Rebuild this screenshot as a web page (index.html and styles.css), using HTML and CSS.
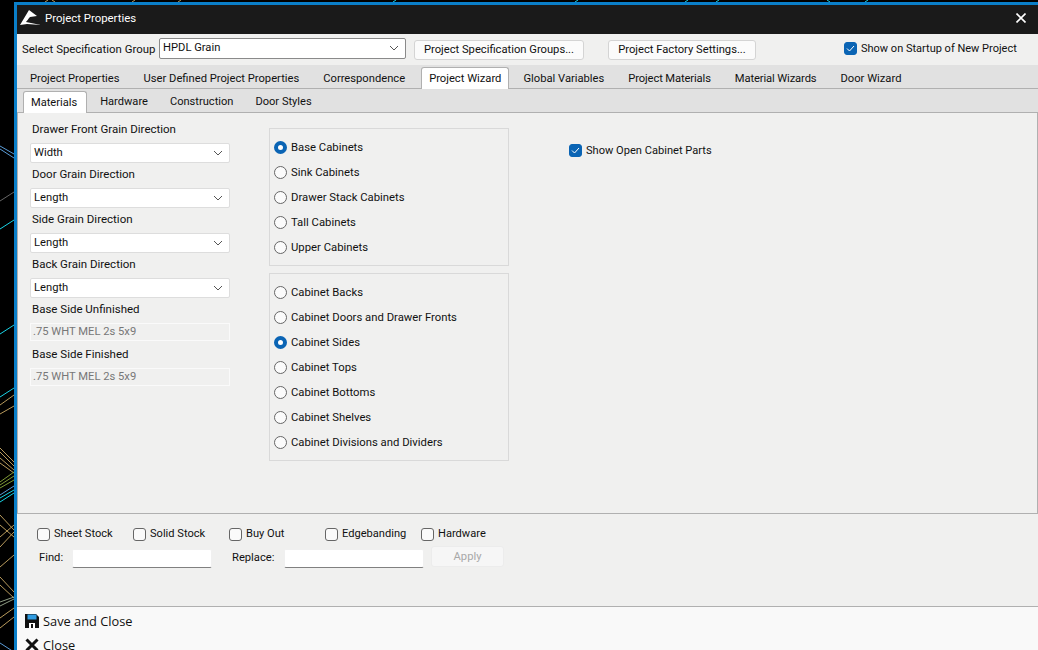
FILE: index.html
```html
<!DOCTYPE html>
<html lang="en">
<head>
<meta charset="utf-8">
<title>Project Properties</title>
<link rel="stylesheet" href="styles.css">
</head>
<body>
<svg class="cad" width="1038" height="650" viewBox="0 0 1038 650" fill="none">
  <g stroke="#19d3e6">
    <path d="M0 229L14 220M0 334L14 325M0 397L14 388M0 498L14 490M0 502L14 493"/>
    <path d="M393 2L396 0M575 2L578 0M685 2L688 0M716 2L719 0M830 2L827 0M865 2L868 0"/>
  </g>
  <g stroke="#5a9bd6"><path d="M0 146L14 154M0 149L14 158M0 495L14 486M0 643L14 652"/></g>
  <path d="M0 201L14 192" stroke="#666"/>
  <g stroke="#b89a5c">
    <path d="M0 405L14 395M0 414L14 406M0 448L14 462M0 452L14 466M0 458L14 470M0 463L14 473M0 515L14 530M0 525L14 537M0 537L14 525M0 547L14 532M0 567L14 555M0 577L14 592M0 585L14 598M0 618L14 608M0 628L14 617"/>
    <path d="M45 2L48 0M52 0L55 2M132 2L135 0M178 2L181 0"/>
  </g>
  <g stroke="#7f9a35"><path d="M0 482L14 472M0 485L14 476M0 488L14 480"/></g>
  <path d="M0 602L14 597M0 606L14 599" stroke="#8f9d85"/>
</svg>
<main class="window">
  <header class="titlebar">
    <svg class="logo" width="21" height="16" viewBox="0 0 21 16"><path d="M0 15L9 0L17 6L10 7C8 9 7 11 6 12L21 15L7 14Z" fill="#fff"/></svg>
    <span class="title">Project Properties</span>
    <svg class="closex" width="10" height="10" viewBox="0 0 10 10"><path d="M0.5 0.5L9.5 9.5M9.5 0.5L0.5 9.5" stroke="#fff" stroke-width="1.6"/></svg>
  </header>

  <section class="specbar">
    <label class="speclabel">Select Specification Group</label>
    <div class="select specselect"><span>HPDL Grain</span><svg class="chev" width="10" height="6" viewBox="0 0 10 6"><path d="M1 1L5 5L9 1" stroke="#555" fill="none"/></svg></div>
    <button class="btn btn-groups">Project Specification Groups...</button>
    <button class="btn btn-factory">Project Factory Settings...</button>
    <label class="check startup"><span class="box on"><svg width="13" height="13" viewBox="0 0 13 13"><path d="M3 6.5L5.5 9L10 4" stroke="#fff" fill="none"/></svg></span>Show on Startup of New Project</label>
  </section>

  <nav class="tabs main-tabs">
    <span class="tab">Project Properties</span>
    <span class="tab">User Defined Project Properties</span>
    <span class="tab">Correspondence</span>
    <span class="tab active">Project Wizard</span>
    <span class="tab">Global Variables</span>
    <span class="tab tight">Project Materials</span>
    <span class="tab tight">Material Wizards</span>
    <span class="tab">Door Wizard</span>
  </nav>
  <nav class="tabs sub-tabs">
    <span class="tab active">Materials</span>
    <span class="tab">Hardware</span>
    <span class="tab">Construction</span>
    <span class="tab">Door Styles</span>
  </nav>

  <section class="panel">
    <div class="fields">
      <label>Drawer Front Grain Direction</label>
      <div class="select"><span>Width</span><svg class="chev" width="10" height="6" viewBox="0 0 10 6"><path d="M1 1L5 5L9 1" stroke="#555" fill="none"/></svg></div>
      <label>Door Grain Direction</label>
      <div class="select"><span>Length</span><svg class="chev" width="10" height="6" viewBox="0 0 10 6"><path d="M1 1L5 5L9 1" stroke="#555" fill="none"/></svg></div>
      <label>Side Grain Direction</label>
      <div class="select"><span>Length</span><svg class="chev" width="10" height="6" viewBox="0 0 10 6"><path d="M1 1L5 5L9 1" stroke="#555" fill="none"/></svg></div>
      <label>Back Grain Direction</label>
      <div class="select"><span>Length</span><svg class="chev" width="10" height="6" viewBox="0 0 10 6"><path d="M1 1L5 5L9 1" stroke="#555" fill="none"/></svg></div>
      <label>Base Side Unfinished</label>
      <div class="readonly">.75 WHT MEL 2s 5x9</div>
      <label>Base Side Finished</label>
      <div class="readonly">.75 WHT MEL 2s 5x9</div>
    </div>
    <div class="groups">
      <div class="group">
        <div class="radio"><span class="dot on"></span>Base Cabinets</div>
        <div class="radio"><span class="dot"></span>Sink Cabinets</div>
        <div class="radio"><span class="dot"></span>Drawer Stack Cabinets</div>
        <div class="radio"><span class="dot"></span>Tall Cabinets</div>
        <div class="radio"><span class="dot"></span>Upper Cabinets</div>
      </div>
      <div class="group">
        <div class="radio"><span class="dot"></span>Cabinet Backs</div>
        <div class="radio"><span class="dot"></span>Cabinet Doors and Drawer Fronts</div>
        <div class="radio"><span class="dot on"></span>Cabinet Sides</div>
        <div class="radio"><span class="dot"></span>Cabinet Tops</div>
        <div class="radio"><span class="dot"></span>Cabinet Bottoms</div>
        <div class="radio"><span class="dot"></span>Cabinet Shelves</div>
        <div class="radio"><span class="dot"></span>Cabinet Divisions and Dividers</div>
      </div>
    </div>
    <label class="check openparts"><span class="box on"><svg width="13" height="13" viewBox="0 0 13 13"><path d="M3 6.5L5.5 9L10 4" stroke="#fff" fill="none"/></svg></span>Show Open Cabinet Parts</label>
  </section>

  <section class="findbar">
    <div class="filters">
      <label class="check w96"><span class="box"></span>Sheet Stock</label>
      <label class="check w96"><span class="box"></span>Solid Stock</label>
      <label class="check w96"><span class="box"></span>Buy Out</label>
      <label class="check w96"><span class="box"></span>Edgebanding</label>
      <label class="check"><span class="box"></span>Hardware</label>
    </div>
    <div class="findrow">
      <label class="findlabel">Find:</label>
      <div class="textinput findinput"></div>
      <label class="replacelabel">Replace:</label>
      <div class="textinput replaceinput"></div>
      <button class="btn apply" disabled>Apply</button>
    </div>
  </section>

  <footer class="actions">
    <div class="action"><svg width="14" height="14" viewBox="0 0 14 14"><path d="M0 0H11L14 3V14H0Z" fill="#111"/><rect x="2.5" y="0.5" width="9" height="5" fill="#2f9be0"/><rect x="4" y="9" width="6" height="5" fill="#fff"/><rect x="6" y="10" width="2" height="4" fill="#111"/></svg><span>Save and Close</span></div>
    <div class="action"><svg width="14" height="14" viewBox="0 0 14 14"><path d="M1.5 1.5L12.5 12.5M12.5 1.5L1.5 12.5" stroke="#111" stroke-width="3"/></svg><span>Close</span></div>
  </footer>
</main>
</body>
</html>
```
FILE: styles.css
```css
* { box-sizing: border-box; }
html, body { margin: 0; height: 650px; overflow: hidden; }
body { background: #000; font: 11.2px/16px Roboto, sans-serif; color: #111; padding: 2px 0 0 14px; position: relative; }
.cad { position: absolute; left: 0; top: 0; }
.window { position: relative; width: 1024px; height: 648px; border-left: 3px solid #0a7fc9; border-top: 3px solid #0a7fc9; background: #f0f0ef; display: flex; flex-direction: column; }
.titlebar { height: 29px; background: #1a1a1a; color: #fff; display: flex; align-items: center; padding: 0 12px 3px 3px; flex: none; }
.logo { margin-right: 4px; }
.title { font-size: 11.4px; flex: 1; }
.specbar { height: 31px; flex: none; display: flex; align-items: center; padding-left: 5px; background: #f0f0ef; }
.speclabel { width: 137px; white-space: nowrap; font-size: 11.4px; padding-bottom: 2px; }
.select { width: 200px; height: 20px; background: #fff; border: 1px solid #ddd; border-radius: 2px; display: flex; align-items: center; justify-content: space-between; padding: 0 3px; }
.specselect { width: 247px; border-color: #8a8a8a; margin-right: 8px; height: 21px; margin-top: -2px; padding-bottom: 1px; }
.chev { margin-right: 3px; }
.btn { font: inherit; color: inherit; height: 20px; background: #fbfbfb; border: 1px solid #d4d4d4; border-radius: 3px; padding: 0; }
.btn-groups { width: 170px; margin-right: 24px; }
.btn-factory { width: 148px; margin-right: 88px; margin-top: 1px; }
.check { display: flex; align-items: center; gap: 4px; white-space: nowrap; }
.startup { font-size: 11px; padding-bottom: 2px; }
.box { width: 13px; height: 13px; border: 1px solid #666; border-radius: 3px; background: #fafafa; display: block; flex: none; }
.box.on { background: #0a64b4; border-color: #0a64b4; }
.box.on svg { display: block; margin: -1px; }
.tabs { display: flex; flex: none; background: #e1e1e1; border-bottom: 1px solid #b0b0b0; align-items: flex-end; }
.main-tabs { height: 24px; padding-left: 1px; }
.sub-tabs { height: 24px; padding-left: 6px; font-size: 11.1px; }
.tab { padding: 0 12px; height: 22px; line-height: 23px; }
.tight { letter-spacing: -0.12px; }
.main-tabs .tab { line-height: 25px; }
.main-tabs .tab.active { line-height: 22px; }
.tab.active { background: #fff; border: 1px solid #b0b0b0; border-bottom: 0; border-radius: 3px 3px 0 0; line-height: 21px; padding: 0 7px; margin: 0 2px 0 4px; position: relative; top: 1px; }
.sub-tabs .tab { padding: 0 11px; }
.sub-tabs .tab.active { margin: 0 2px 0 0; padding: 0 9px 0 7px; }
.panel { height: 401px; flex: none; border-bottom: 1px solid #b0b0b0; border-right: 1px solid #b0b0b0; border-left: 1px solid #b0b0b0; display: flex; background: #f0f0ef; padding: 8px 0 0 12px; }
.fields { width: 239px; display: flex; flex-direction: column; flex: none; }
.fields label { height: 16px; padding-left: 2px; font-size: 11.5px; }
.fields .select { height: 20px; margin: 6px 0 3px; }
.readonly { width: 200px; height: 18px; margin: 6px 0 5px; background: #f0f0ef; border: 1px solid #fafafa; color: #777; line-height: 16px; padding-left: 2px; }
.groups { width: 240px; flex: none; display: flex; flex-direction: column; gap: 7px; margin-top: 7px; }
.group { border: 1px solid #d9d9d9; padding: 6px 0 5px 4px; }
.radio { height: 25px; display: flex; align-items: center; gap: 4px; font-size: 11.3px; }
.dot { width: 13px; height: 13px; border-radius: 50%; border: 1px solid #666; background: #fbfbfb; flex: none; }
.dot.on { border: 4px solid #0a64b4; background: #fff; }
.openparts { margin: 21px 0 0 60px; height: 16px; padding-top: 2px; align-self: flex-start; font-size: 11.1px; }
.openparts .box { margin-top: -2px; }
.findbar { height: 92px; flex: none; padding: 12px 0 0 20px; }
.filters { display: flex; height: 16px; font-size: 11.1px; }
.w96 { width: 96px; }
.findrow { display: flex; align-items: center; margin-top: 6px; padding-left: 2px; }
.findlabel { width: 33px; }
.textinput { height: 19px; margin-top: 1px; background: #fff; border: 1px solid #f0f0f0; border-bottom: 1px solid #808080; border-radius: 2px; }
.findinput { width: 140px; margin-right: 20px; }
.replacelabel { width: 52px; }
.replaceinput { width: 140px; margin-right: 7px; }
.apply { width: 73px; height: 21px; margin-top: -3px; color: #a8a8a8; background: #f6f6f6; border-color: #ececec; }
.actions { flex: 1; background: #f9f9f9; border-top: 1px solid #b0b0b0; padding: 2px 0 0 8px; font: 12.8px/16px "Open Sans", sans-serif; }
.action { display: flex; align-items: center; gap: 4px; height: 24px; }
```
